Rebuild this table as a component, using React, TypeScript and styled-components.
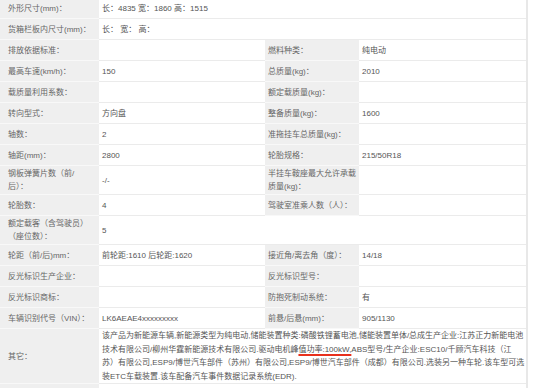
import React from "react";
import styled, { createGlobalStyle } from "styled-components";

const GlobalStyle = createGlobalStyle`
  html, body {
    margin: 0;
    padding: 0;
    background: #fff;
    overflow: hidden;
  }
  body {
    width: 553px;
    height: 388px;
    font-family: "Liberation Sans", "Noto Sans CJK SC", sans-serif;
  }
`;

const TableSc = styled.div`
  display: grid;
  grid-template-columns: 99px 166px 94px 167px;
  width: 526px;
  margin-top: -2px;
  border-right: 2px solid #e8e8e8;
  font-size: 8px;
`;

const LabelSc = styled.div<{ $first?: boolean }>`
  display: flex;
  align-items: center;
  min-height: 21px;
  box-sizing: border-box;
  padding: 1px 2px 1px ${(p) => (p.$first ? "8px" : "3px")};
  background: #efefef;
  border-bottom: 1px solid #f8f8f8;
  color: #666;
  line-height: 13px;
`;

const ValueSc = styled.div<{ $span?: number }>`
  grid-column: span ${(p) => p.$span || 1};
  display: flex;
  align-items: center;
  min-height: 21px;
  box-sizing: border-box;
  padding: 1px 3px;
  background: #fff;
  border-bottom: 1px solid #ebebeb;
  color: #555;
  line-height: 13px;
`;

const LongTextSc = styled.div`
  line-height: 13.5px;
  margin: -1px 0;
`;

const LineSc = styled.span`
  display: block;
  white-space: nowrap;
`;

const MarkSc = styled.span`
  text-decoration: underline;
  text-decoration-color: #e8301c;
  text-decoration-thickness: 1.5px;
  text-underline-offset: 1.5px;
`;

type Pair = [React.ReactNode, React.ReactNode, React.ReactNode, React.ReactNode];

const pairs: Pair[] = [
  ["排放依据标准：", "", "燃料种类：", "纯电动"],
  ["最高车速(km/h)：", "150", "总质量(kg)：", "2010"],
  ["载质量利用系数：", "", "额定载质量(kg)：", ""],
  ["转向型式：", "方向盘", "整备质量(kg)：", "1600"],
  ["轴数：", "2", "准拖挂车总质量(kg)：", ""],
  ["轴距(mm)：", "2800", "轮胎规格：", "215/50R18"],
  [
    <>钢板弹簧片数（前/<br />后）：</>,
    "-/-",
    <>半挂车鞍座最大允许承载<br />质量(kg)：</>,
    "",
  ],
  ["轮胎数：", "4", "驾驶室准乘人数（人）：", ""],
];

const pairs2: Pair[] = [
  ["轮距（前/后)mm：", "前轮距:1610 后轮距:1620", "接近角/离去角（度）：", "14/18"],
  ["反光标识生产企业：", "", "反光标识型号：", ""],
  ["反光标识商标：", "", "防抱死制动系统：", "有"],
  ["车辆识别代号（VIN）：", "LK6AEAE4xxxxxxxxx", "前悬/后悬(mm)：", "905/1130"],
];

function PairRows({ rows }: { rows: Pair[] }) {
  return (
    <>
      {rows.map((r, i) => (
        <React.Fragment key={i}>
          <LabelSc $first>{r[0]}</LabelSc>
          <ValueSc>{r[1]}</ValueSc>
          <LabelSc>{r[2]}</LabelSc>
          <ValueSc>{r[3]}</ValueSc>
        </React.Fragment>
      ))}
    </>
  );
}

export default function App() {
  return (
    <>
      <GlobalStyle />
      <TableSc>
        <LabelSc $first>外形尺寸(mm)：</LabelSc>
        <ValueSc $span={3}>长：4835 宽：1860 高：1515</ValueSc>
        <LabelSc $first>货箱栏板内尺寸(mm)：</LabelSc>
        <ValueSc $span={3}>长： 宽： 高：</ValueSc>
        <PairRows rows={pairs} />
        <LabelSc $first>
          额定载客（含驾驶员）
          <br />
          （座位数）：
        </LabelSc>
        <ValueSc $span={3}>5</ValueSc>
        <PairRows rows={pairs2} />
        <LabelSc $first>其它：</LabelSc>
        <ValueSc $span={3}>
          <LongTextSc>
            <LineSc>该产品为新能源车辆,新能源类型为纯电动,储能装置种类:磷酸铁锂蓄电池,储能装置单体/总成生产企业:江苏正力新能电池</LineSc>
            <LineSc>
              技术有限公司/柳州华霆新能源技术有限公司.驱动电机峰<MarkSc>值功率:100kW,</MarkSc>ABS型号/生产企业:ESC10/千顾汽车科技（江
            </LineSc>
            <LineSc>苏）有限公司,ESP9/博世汽车部件（苏州）有限公司,ESP9/博世汽车部件（成都）有限公司.选装另一种车轮.该车型可选</LineSc>
            <LineSc>装ETC车载装置.该车配备汽车事件数据记录系统(EDR).</LineSc>
          </LongTextSc>
        </ValueSc>
        <LabelSc $first>说明：</LabelSc>
        <ValueSc $span={3}></ValueSc>
      </TableSc>
    </>
  );
}
